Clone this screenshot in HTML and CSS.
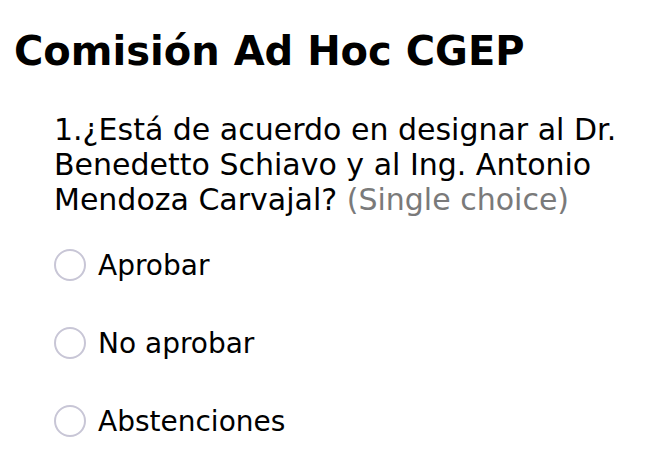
FILE: index.html
```html
<!DOCTYPE html>
<html lang="es">
<head>
<meta charset="utf-8">
<link rel="stylesheet" href="styles.css">
</head>
<body>
<h1 class="title">Comisión Ad Hoc CGEP</h1>
<div class="question">
  <p class="q-text">1.¿Está de acuerdo en designar al Dr. Benedetto Schiavo y al Ing. Antonio Mendoza Carvajal? <span class="q-type">(Single choice)</span></p>
  <ul class="options">
    <li class="option"><span class="radio"></span><span class="label">Aprobar</span></li>
    <li class="option"><span class="radio"></span><span class="label">No aprobar</span></li>
    <li class="option"><span class="radio"></span><span class="label">Abstenciones</span></li>
  </ul>
</div>
</body>
</html>
```
FILE: styles.css
```css
html, body {
  margin: 0;
  padding: 0;
  background: #fff;
}
body {
  font-family: "DejaVu Sans", sans-serif;
  color: #000;
  padding: 27px 14px 0 14px;
}
.title {
  font-size: 40px;
  font-weight: bold;
  margin: 0;
  line-height: 48px;
}
.question {
  padding-left: 40px;
  margin-top: 37px;
  max-width: 570px;
}
.q-text {
  font-size: 30px;
  line-height: 35px;
  margin: 0;
}
.q-type {
  color: #7a7a7a;
}
.options {
  list-style: none;
  margin: 9px 0 0 0;
  padding: 0;
}
.option {
  display: flex;
  align-items: center;
  gap: 12px;
  height: 78px;
  font-size: 28px;
}
.radio {
  width: 28px;
  height: 28px;
  border: 2px solid #c8c6d6;
  border-radius: 50%;
  flex: none;
}
```
